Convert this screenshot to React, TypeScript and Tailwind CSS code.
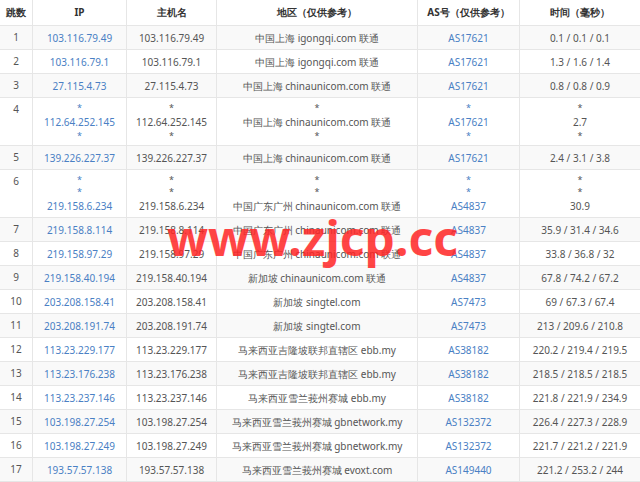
const rows: { n: number; ip: string[]; host: string[]; loc: string[]; as: string[]; t: string[] }[] = [
  { n: 1, ip: ['103.116.79.49'], host: ['103.116.79.49'], loc: ['中国上海 igongqi.com 联通'], as: ['AS17621'], t: ['0.1 / 0.1 / 0.1'] },
  { n: 2, ip: ['103.116.79.1'], host: ['103.116.79.1'], loc: ['中国上海 igongqi.com 联通'], as: ['AS17621'], t: ['1.3 / 1.6 / 1.4'] },
  { n: 3, ip: ['27.115.4.73'], host: ['27.115.4.73'], loc: ['中国上海 chinaunicom.com 联通'], as: ['AS17621'], t: ['0.8 / 0.8 / 0.9'] },
  { n: 4, ip: ['*', '112.64.252.145', '*'], host: ['*', '112.64.252.145', '*'], loc: ['*', '中国上海 chinaunicom.com 联通', '*'], as: ['*', 'AS17621', '*'], t: ['*', '2.7', '*'] },
  { n: 5, ip: ['139.226.227.37'], host: ['139.226.227.37'], loc: ['中国上海 chinaunicom.com 联通'], as: ['AS17621'], t: ['2.4 / 3.1 / 3.8'] },
  { n: 6, ip: ['*', '*', '219.158.6.234'], host: ['*', '*', '219.158.6.234'], loc: ['*', '*', '中国广东广州 chinaunicom.com 联通'], as: ['*', '*', 'AS4837'], t: ['*', '*', '30.9'] },
  { n: 7, ip: ['219.158.8.114'], host: ['219.158.8.114'], loc: ['中国广东广州 chinaunicom.com 联通'], as: ['AS4837'], t: ['35.9 / 31.4 / 34.6'] },
  { n: 8, ip: ['219.158.97.29'], host: ['219.158.97.29'], loc: ['中国广东广州 chinaunicom.com 联通'], as: ['AS4837'], t: ['33.8 / 36.8 / 32'] },
  { n: 9, ip: ['219.158.40.194'], host: ['219.158.40.194'], loc: ['新加坡 chinaunicom.com 联通'], as: ['AS4837'], t: ['67.8 / 74.2 / 67.2'] },
  { n: 10, ip: ['203.208.158.41'], host: ['203.208.158.41'], loc: ['新加坡 singtel.com'], as: ['AS7473'], t: ['69 / 67.3 / 67.4'] },
  { n: 11, ip: ['203.208.191.74'], host: ['203.208.191.74'], loc: ['新加坡 singtel.com'], as: ['AS7473'], t: ['213 / 209.6 / 210.8'] },
  { n: 12, ip: ['113.23.229.177'], host: ['113.23.229.177'], loc: ['马来西亚吉隆坡联邦直辖区 ebb.my'], as: ['AS38182'], t: ['220.2 / 219.4 / 219.5'] },
  { n: 13, ip: ['113.23.176.238'], host: ['113.23.176.238'], loc: ['马来西亚吉隆坡联邦直辖区 ebb.my'], as: ['AS38182'], t: ['218.5 / 218.5 / 218.5'] },
  { n: 14, ip: ['113.23.237.146'], host: ['113.23.237.146'], loc: ['马来西亚雪兰莪州赛城 ebb.my'], as: ['AS38182'], t: ['221.8 / 221.9 / 234.9'] },
  { n: 15, ip: ['103.198.27.254'], host: ['103.198.27.254'], loc: ['马来西亚雪兰莪州赛城 gbnetwork.my'], as: ['AS132372'], t: ['226.4 / 227.3 / 228.9'] },
  { n: 16, ip: ['103.198.27.249'], host: ['103.198.27.249'], loc: ['马来西亚雪兰莪州赛城 gbnetwork.my'], as: ['AS132372'], t: ['221.7 / 221.2 / 221.9'] },
  { n: 17, ip: ['193.57.57.138'], host: ['193.57.57.138'], loc: ['马来西亚雪兰莪州赛城 evoxt.com'], as: ['AS149440'], t: ['221.2 / 253.2 / 244'] },
]

function Lines({ items }: { items: string[] }) {
  return (
    <div className="flex flex-col items-center">
      {items.map((s, i) => (
        <span key={i} className={s === '*' ? 'leading-[12px] text-[9px]' : 'leading-[16px] whitespace-nowrap'}>{s}</span>
      ))}
    </div>
  )
}

export default function App() {
  const cell = 'border border-[#e6e6e6] px-1 text-center align-middle'
  return (
    <div className="relative w-[640px] h-[482px] overflow-hidden bg-white text-[10px] text-[#555] font-['Noto_Sans','Noto_Sans_CJK_SC',sans-serif]">
      <table className="w-[641px] border-collapse table-fixed -mt-px -ml-px">
        <colgroup>
          <col className="w-[33px]" />
          <col className="w-[94px]" />
          <col className="w-[90px]" />
          <col className="w-[201px]" />
          <col className="w-[102px]" />
          <col className="w-[121px]" />
        </colgroup>
        <thead>
          <tr className="h-[26px] bg-white text-[#333] font-bold">
            <th className={cell}>跳数</th>
            <th className={cell}>IP</th>
            <th className={cell}>主机名</th>
            <th className={cell}>地区（仅供参考）</th>
            <th className={cell}>AS号（仅供参考）</th>
            <th className={cell}>时间（毫秒）</th>
          </tr>
        </thead>
        <tbody>
          {rows.map((r) => {
            const multi = r.ip.length > 1
            return (
              <tr key={r.n} className={`${multi ? 'h-[48px]' : 'h-[24px]'} ${r.n % 2 ? 'bg-[#f9f9f9]' : 'bg-white'}`}>
                <td className={`${cell} ${multi ? '!align-top pt-1' : ''}`}>{r.n}</td>
                <td className={`${cell} text-[#4a80c4]`}><Lines items={r.ip} /></td>
                <td className={cell}><Lines items={r.host} /></td>
                <td className={cell}><Lines items={r.loc} /></td>
                <td className={`${cell} text-[#4a80c4]`}><Lines items={r.as} /></td>
                <td className={cell}><Lines items={r.t} /></td>
              </tr>
            )
          })}
        </tbody>
      </table>
      <div className="absolute left-[167px] top-[214px] text-[48px] leading-none font-bold text-[#ff2424]/85 font-['Liberation_Sans',sans-serif]">
        www.zjcp.cc
      </div>
    </div>
  )
}
